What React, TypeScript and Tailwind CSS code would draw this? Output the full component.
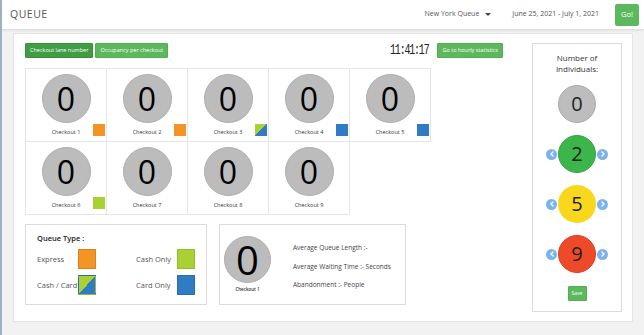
import React from 'react';
import { ChevronLeft, ChevronRight } from 'lucide-react';

type Kind = 'express' | 'cashcard' | 'card' | 'cash' | 'none';

const checkouts: { name: string; kind: Kind }[] = [
  { name: 'Checkout 1', kind: 'express' },
  { name: 'Checkout 2', kind: 'express' },
  { name: 'Checkout 3', kind: 'cashcard' },
  { name: 'Checkout 4', kind: 'card' },
  { name: 'Checkout 5', kind: 'card' },
  { name: 'Checkout 6', kind: 'cash' },
  { name: 'Checkout 7', kind: 'none' },
  { name: 'Checkout 8', kind: 'none' },
  { name: 'Checkout 9', kind: 'none' },
];

const swatch: Record<Kind, string> = {
  express: 'bg-[#f39424]',
  cash: 'bg-[#a9d134]',
  card: 'bg-[#2f7bc4]',
  cashcard: 'bg-[linear-gradient(to_bottom_right,#a9d134_50%,#2f7bc4_50%)]',
  none: '',
};

const CheckoutCell = ({ name, kind }: { name: string; kind: Kind }) => (
  <div className="relative h-[74px] border border-[#e6e6e6] -ml-px -mt-px flex flex-col items-center pt-[5px]">
    <div className="w-[49px] h-[49px] rounded-full bg-[#bcbcbc] border border-[#adadad] flex items-center justify-center text-[32px] leading-none text-black">
      0
    </div>
    <div className="mt-[5px] text-[5.5px] text-[#333]">{name}</div>
    {kind !== 'none' && (
      <div className={`absolute right-px bottom-[5px] w-[12px] h-[12px] ${swatch[kind]}`} />
    )}
  </div>
);

const Arrow = ({ dir }: { dir: 'l' | 'r' }) => (
  <div className="w-[11px] h-[11px] rounded-full bg-[#7db3ec] flex items-center justify-center">
    {dir === 'l' ? (
      <ChevronLeft className="w-[8px] h-[8px] text-white" strokeWidth={4} />
    ) : (
      <ChevronRight className="w-[8px] h-[8px] text-white" strokeWidth={4} />
    )}
  </div>
);

const Counter = ({ value, color }: { value: number; color: string }) => (
  <div className="flex items-center justify-center gap-[1px]">
    <Arrow dir="l" />
    <div className={`w-[38px] h-[38px] rounded-full flex items-center justify-center text-[20px] leading-none text-[#222] ${color}`}>
      {value}
    </div>
    <Arrow dir="r" />
  </div>
);

const LegendItem = ({ label, kind }: { label: string; kind: Kind }) => (
  <div className="flex items-center">
    <span className="w-[42px] text-[7.5px] text-[#555] whitespace-nowrap">{label}</span>
    <div className={`w-[19px] h-[20px] border border-black/10 ${swatch[kind]}`} />
  </div>
);

export default function App() {
  return (
    <div className="w-full h-[335px] bg-[#f2f2f2] border-l-2 border-[#9fb0c6] font-['Open_Sans',sans-serif] overflow-hidden">
      <header className="h-[29px] bg-white shadow-[0_1px_3px_rgba(0,0,0,0.12)] flex items-center pl-[8px] pr-[5px]">
        <div className="text-[10.5px] text-[#555] tracking-[0.5px]">QUEUE</div>
        <div className="ml-auto flex items-center text-[7px] text-[#555]">
          <span>New York Queue</span>
          <span className="ml-[6px] w-0 h-0 border-l-[3px] border-r-[3px] border-t-[3px] border-l-transparent border-r-transparent border-t-[#444]" />
        </div>
        <div className="ml-[21px] text-[7px] text-[#555]">June 25, 2021 - July 1, 2021</div>
        <button className="ml-[16px] w-[24px] h-[22px] rounded-[2px] bg-[#5cb85c] text-white text-[7.5px]">Go!</button>
      </header>

      <main className="mx-[11px] mt-[4px] h-[289px] bg-white border border-[#e4e4e4] flex pl-[11px] pr-[10px] pt-[9px] pb-[10px]">
        <div className="w-[478px] flex flex-col">
          <div className="flex items-center h-[15px]">
            <button className="h-[15px] px-[4px] bg-[#3f9d43] border border-[#37913b] text-white text-[5.5px] rounded-[1px]">Checkout lane number</button>
            <button className="ml-[2px] h-[15px] px-[4px] bg-[#5cb85c] border border-[#53ae53] text-white text-[5.5px] rounded-[1px]">Occupancy per checkout</button>
            <div className="ml-auto font-['Liberation_Mono',monospace] text-[10px] leading-none tracking-[-1.2px] text-[#222] scale-y-[1.45]">11:41:17</div>
            <button className="ml-[9px] h-[15px] px-[4px] bg-[#5cb85c] border border-[#53ae53] text-white text-[5.5px] rounded-[1px]">Go to hourly statistics</button>
          </div>

          <div className="mt-[10px] w-[406px] grid grid-cols-5 pl-px pt-px">
            {checkouts.map((c) => (
              <CheckoutCell key={c.name} name={c.name} kind={c.kind} />
            ))}
          </div>

          <div className="mt-[9px] flex gap-[12px]">
            <div className="w-[182px] h-[81px] border border-[#dcdcdc] px-[11px] pt-[8px]">
              <div className="text-[7.5px] font-semibold text-[#222]">Queue Type :</div>
              <div className="mt-[5px] grid grid-cols-2 gap-x-[40px] gap-y-[6px]">
                <LegendItem label="Express" kind="express" />
                <LegendItem label="Cash Only" kind="cash" />
                <LegendItem label="Cash / Card" kind="cashcard" />
                <LegendItem label="Card Only" kind="card" />
              </div>
            </div>

            <div className="w-[187px] h-[81px] border border-[#dcdcdc] flex items-center pl-[4px]">
              <div className="flex flex-col items-center">
                <div className="w-[47px] h-[47px] rounded-full bg-[#bcbcbc] border border-[#adadad] flex items-center justify-center text-[40px] leading-none text-black">
                  0
                </div>
                <div className="mt-[3px] text-[4.5px] font-semibold text-[#333]">Checkout 1</div>
              </div>
              <div className="ml-[22px] flex flex-col gap-[9px] text-[6.5px] text-[#444] pt-[4px]">
                <div>Average Queue Length :-</div>
                <div>Average Waiting Time :- Seconds</div>
                <div>Abandonment :- People</div>
              </div>
            </div>
          </div>
        </div>

        <div className="ml-auto w-[90px] h-[269px] border border-[#dcdcdc] flex flex-col items-center pt-[8px]">
          <div className="text-[8px] leading-[11px] text-[#333] text-center">
            Number of
            <br />
            Individuals:
          </div>
          <div className="mt-[11px] w-[38px] h-[38px] rounded-full bg-[#bdbdbd] border border-[#aaaaaa] flex items-center justify-center text-[20px] leading-none text-[#222]">
            0
          </div>
          <div className="mt-[12px]">
            <Counter value={2} color="bg-[#3cb54a] border border-[#34a542]" />
          </div>
          <div className="mt-[12px]">
            <Counter value={5} color="bg-[#f9d71c]" />
          </div>
          <div className="mt-[12px]">
            <Counter value={9} color="bg-[#ee4a2a] border border-[#d93e20]" />
          </div>
          <button className="mt-[13px] w-[19px] h-[15px] bg-[#5cb85c] border border-[#53ae53] text-white text-[5px] rounded-[1px]">Save</button>
        </div>
      </main>
    </div>
  );
}
